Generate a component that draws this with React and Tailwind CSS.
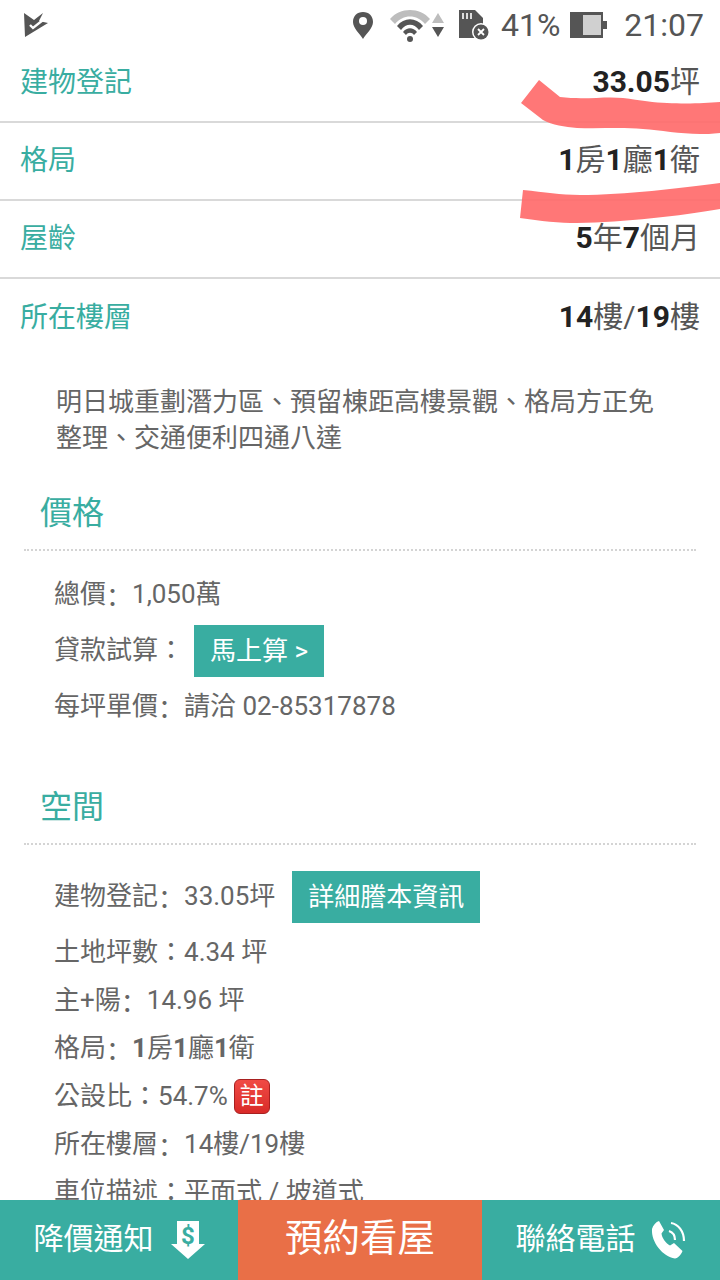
const FONT = "font-['Roboto','Noto_Sans_CJK_TC',sans-serif]";
const COLON = '\uFF1A';

const StatusBar = () => (
  <div className="h-[50px] flex items-center pl-[24px] pr-[16px] text-[#555555]">
    <svg width="26" height="26" viewBox="0 0 26 26">
      <path d="M0 1 L10 8 L19 1 L15 9 L24 11 L1 25 Z" fill="#555555" />
      <path d="M6 13 L9 16 L19 8" fill="none" stroke="#ffffff" strokeWidth="2.4" />
    </svg>
    <div className="ml-auto flex items-center">
      <svg width="22" height="28" viewBox="0 0 22 28">
        <path d="M11 1 C5 1 1 5 1 11 C1 17 8 23 11 28 C14 23 21 17 21 11 C21 5 17 1 11 1 Z" fill="#555555" />
        <circle cx="11" cy="10" r="4" fill="#ffffff" />
      </svg>
      <svg width="42" height="34" viewBox="0 0 42 34" className="ml-[15px]">
        <path d="M1 11 C11 -1 31 -1 41 11 L36 16 C28 6 14 6 6 16 Z" fill="#bdbdbd" />
        <path d="M8 18 C15 9 27 9 34 18 L30 22 C25 15 17 15 12 22 Z" fill="#555555" />
        <path d="M14 24 C18 19 24 19 28 24 L25 27 C23 24 19 24 17 27 Z" fill="#555555" />
        <circle cx="21" cy="31" r="3" fill="#555555" />
      </svg>
      <svg width="12" height="26" viewBox="0 0 12 26" className="ml-[1px]">
        <path d="M6 1 L12 11 L0 11 Z" fill="#bdbdbd" />
        <path d="M0 15 L12 15 L6 25 Z" fill="#555555" />
      </svg>
      <svg width="32" height="30" viewBox="0 0 32 30" className="ml-[14px]">
        <path d="M1 0 L17 0 L25 8 L25 28 L1 28 Z" fill="#555555" />
        <path d="M5 3 V9 M9 3 V9 M13 3 V9" stroke="#ffffff" strokeWidth="1.6" />
        <circle cx="23" cy="22" r="9" fill="#ffffff" />
        <circle cx="23" cy="22" r="7.5" fill="#555555" />
        <path d="M20 19 L26 25 M26 19 L20 25" stroke="#ffffff" strokeWidth="1.8" />
      </svg>
      <span className="ml-[11px] text-[32px] leading-none">41%</span>
      <svg width="38" height="28" viewBox="0 0 38 28" className="ml-[10px]">
        <rect x="0" y="1" width="33" height="26" fill="#555555" />
        <rect x="13" y="4" width="18" height="20" fill="#d0d0d0" />
        <rect x="33" y="10" width="4" height="8" fill="#555555" />
      </svg>
      <span className="ml-[16px] text-[32px] leading-none">21:07</span>
    </div>
  </div>
);

const SpecRow = ({ label, last, children }) => (
  <div className={`h-[78px] flex items-center justify-between pl-[20px] pr-[20px] ${last ? '' : 'border-b-2 border-[#d9d9d9]'}`}>
    <span className="text-[28px] text-[#39ada1] pb-[1px]">{label}</span>
    <span className="text-[30px] text-[#555555] pb-[3px]">{children}</span>
  </div>
);

const B = ({ children }) => <b className="font-bold text-[#222222]">{children}</b>;

// 原圖有些冒號靠左,SC 字型的全形冒號才是這樣
const Colon = () => <span className="font-['Noto_Sans_CJK_SC',sans-serif]">{COLON}</span>;

const Heading = ({ children }) => (
  <div className="mx-[24px] pl-[16px] border-b-2 border-dotted border-[#d4d4d4]">
    <h2 className="text-[32px] text-[#39ada1] font-normal leading-[48px] pt-[1px] pb-[12px]">{children}</h2>
  </div>
);

const Line = ({ h = 48, children }) => (
  <div className="flex items-center text-[26px] text-[#666666] whitespace-pre pb-[2px]" style={{ height: h }}>{children}</div>
);

const BottomButton = ({ className, children }) => (
  <div className={`h-full flex items-center justify-center text-white ${className}`}>{children}</div>
);

export default function App() {
  return (
    <div className={`relative w-[720px] h-[1280px] overflow-hidden bg-white ${FONT}`}>
      <StatusBar />

      <div className="mt-[-5px]">
        <SpecRow label="建物登記"><B>33.05</B>坪</SpecRow>
        <SpecRow label="格局"><B>1</B>房<B>1</B>廳<B>1</B>衛</SpecRow>
        <SpecRow label="屋齡"><B>5</B>年<B>7</B>個月</SpecRow>
        <SpecRow label="所在樓層" last><B>14</B>樓/<B>19</B>樓</SpecRow>
      </div>

      <p className="mt-[27px] ml-[56px] w-[610px] text-[26px] leading-[36px] text-[#666666]">
        明日城重劃潛力區、預留棟距高樓景觀、格局方正免整理、交通便利四通八達
      </p>

      <div className="mt-[32px]">
        <Heading>價格</Heading>
      </div>
      <div className="pl-[54px] mt-[20px]">
        <Line h={48}><span>總價</span><Colon />1,050萬</Line>
        <Line h={64}>
          貸款試算{COLON}
          <span className="ml-[10px] mt-[2px] w-[130px] h-[52px] flex items-center justify-center bg-[#39ada1] text-white text-[26px]">馬上算 &gt;</span>
        </Line>
        <Line h={48}><span>每坪單價</span><Colon />請洽 02-85317878</Line>
      </div>

      <div className="mt-[51px]">
        <Heading>空間</Heading>
      </div>
      <div className="pl-[54px] mt-[26px]">
        <Line h={52}>
          <span>建物登記</span><Colon />33.05坪
          <span className="ml-[17px] mt-[2px] w-[188px] h-[52px] flex items-center justify-center bg-[#39ada1] text-white text-[26px]">詳細謄本資訊</span>
        </Line>
        <div className="mt-[6px]">
          <Line>土地坪數{COLON}4.34 坪</Line>
        </div>
        <Line><span>主+陽</span><Colon />14.96 坪</Line>
        <Line><span>格局</span><Colon /><b className="font-bold">1</b>房<b className="font-bold">1</b>廳<b className="font-bold">1</b>衛</Line>
        <Line>
          公設比{COLON}54.7%
          <span className="ml-[6px] w-[36px] h-[35px] flex items-center justify-center rounded-[6px] bg-gradient-to-b from-[#f04a45] to-[#d92a28] border border-[#a82020] text-white text-[24px]">註</span>
        </Line>
        <Line><span>所在樓層</span><Colon />14樓/19樓</Line>
        <Line>車位描述{COLON}平面式 / 坡道式</Line>
      </div>

      {/* 截圖上的手繪紅線 */}
      <svg className="absolute left-0 top-0 pointer-events-none" width="720" height="230" viewBox="0 0 720 230">
        <path d="M521 103 L539 80 L560 97 C585 100 605 96 623 98 C640 100 655 103 667 103 C690 104 705 103 720 102 L720 133 C712 134 705 134 700 134 C680 134 660 130 643 129 C620 127 600 129 577 128 C565 127 552 125 543 120 Z" fill="#ff6b6b" fillOpacity="0.92" />
        <path d="M523 190 C545 192 560 195 580 195 C625 195 680 188 720 183 L720 209 C680 216 625 222 577 223 C560 223 540 221 520 218 Z" fill="#ff6b6b" fillOpacity="0.92" />
      </svg>

      <div className="absolute left-0 bottom-0 w-full h-[80px] flex">
        <BottomButton className="w-[238px] bg-[#39ada1] gap-[17px] text-[30px] pb-[3px]">
          降價通知
          <svg width="34" height="38" viewBox="0 0 34 38" className="mt-[3px]">
            <path d="M6 0 L28 0 L28 23 L34 23 L17 38 L0 23 L6 23 Z" fill="#ffffff" />
            <text x="17" y="23" textAnchor="middle" fontSize="24" fontWeight="700" fill="#39ada1" fontFamily="Roboto">$</text>
          </svg>
        </BottomButton>
        <BottomButton className="w-[244px] bg-[#e96f47] text-[37.5px] pb-[3px]">預約看屋</BottomButton>
        <BottomButton className="flex-1 bg-[#39ada1] gap-[15px] text-[30px] pb-[3px]">
          聯絡電話
          <svg width="36" height="40" viewBox="0 0 36 40" className="mt-[3px]">
            <path d="M8 1 L13 10 L10.5 13.5 C11 18 14.5 23 19 25.5 L23 23 L31.5 31 C30 35 27 38 24 38.5 C12 37 0 22 1 9 C2 5 5 2 8 1 Z" fill="#ffffff" />
            <path d="M18 11 C21 12 24 15 24 20" fill="none" stroke="#ffffff" strokeWidth="2.2" />
            <path d="M20 3 C27 4 33 11 33 21" fill="none" stroke="#ffffff" strokeWidth="2.2" />
          </svg>
        </BottomButton>
      </div>
    </div>
  );
}
